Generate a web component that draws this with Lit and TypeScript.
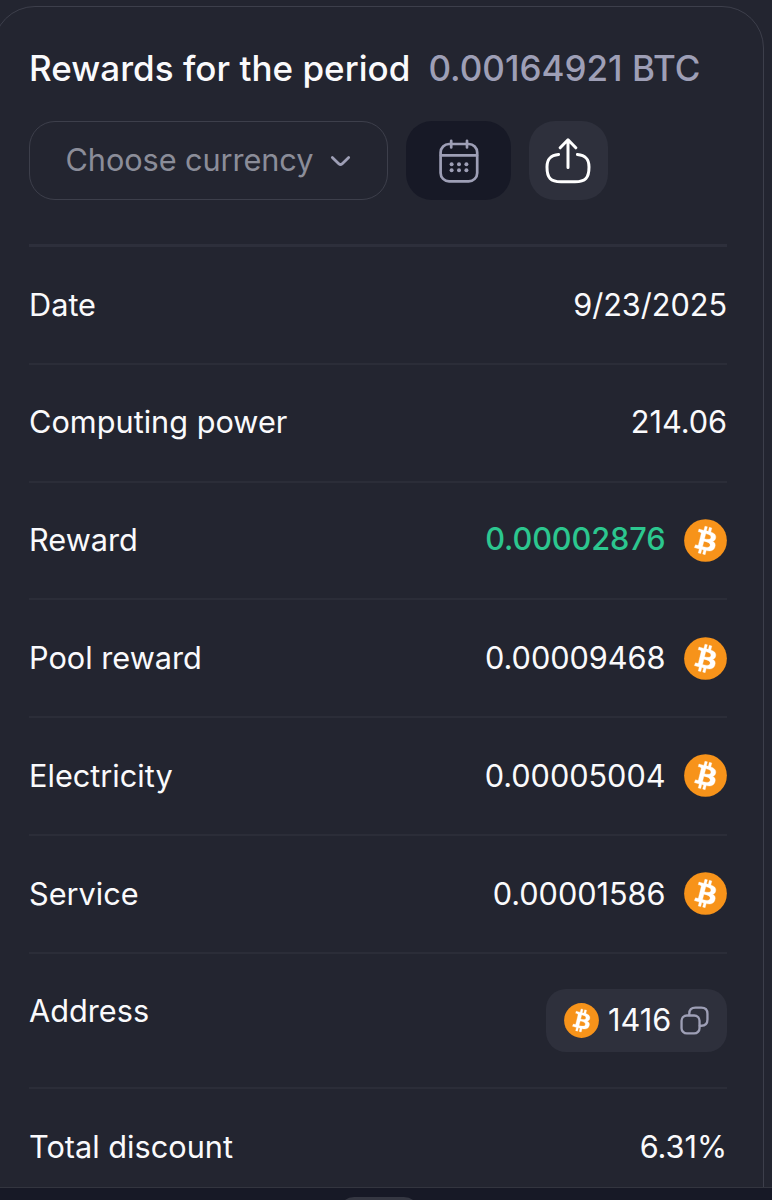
import { LitElement, html, css, nothing } from "lit";
import { customElement, property } from "lit/decorators.js";

interface Row {
  label: string;
  value: string;
  coin?: boolean;
  positive?: boolean;
}

const ROWS: Row[] = [
  { label: "Date", value: "9/23/2025" },
  { label: "Computing power", value: "214.06" },
  { label: "Reward", value: "0.00002876", coin: true, positive: true },
  { label: "Pool reward", value: "0.00009468", coin: true },
  { label: "Electricity", value: "0.00005004", coin: true },
  { label: "Service", value: "0.00001586", coin: true },
];

@customElement("btc-coin")
class BtcCoin extends LitElement {
  @property({ type: Number }) size = 43;
  static styles = css`
    :host { display: block; flex: none; }
    svg { display: block; }
  `;
  render() {
    return html`<svg width=${this.size} height=${this.size} viewBox="0 0 32 32">
      <circle cx="16" cy="16" r="15.9" fill="#f7931a" />
      <path
        transform="translate(16 16) scale(1.06) translate(-16 -16)"
        fill="#fff"
        stroke="#fff"
        stroke-width="0.25"
        d="M23.189 14.02c.314-2.096-1.283-3.223-3.465-3.975l.708-2.84-1.728-.43-.69 2.765c-.454-.114-.92-.22-1.385-.326l.695-2.783L15.596 6l-.708 2.839c-.376-.086-.746-.17-1.104-.26l.002-.009-2.384-.595-.46 1.846s1.283.294 1.256.312c.7.175.826.638.805 1.006l-.806 3.235c.048.012.11.03.18.057l-.183-.045-1.13 4.532c-.086.212-.303.531-.793.41.018.025-1.256-.313-1.256-.313l-.858 1.978 2.25.561c.418.105.828.215 1.231.318l-.715 2.872 1.727.43.708-2.84c.472.127.93.245 1.378.357l-.706 2.828 1.728.43.715-2.866c2.948.558 5.164.333 6.097-2.333.752-2.146-.037-3.385-1.588-4.192 1.13-.26 1.98-1.003 2.207-2.538zm-3.95 5.538c-.533 2.147-4.148.986-5.32.695l.95-3.805c1.172.293 4.929.872 4.37 3.11zm.535-5.569c-.487 1.953-3.495.96-4.47.717l.86-3.45c.975.243 4.118.696 3.61 2.733z"
      />
    </svg>`;
  }
}

@customElement("app-root")
class AppRoot extends LitElement {
  static styles = css`
    :host {
      display: flex;
      flex-direction: column;
      height: 1200px;
      overflow: hidden;
      background: #232530;
      color: #fafafc;
      font-family: Inter, "Liberation Sans", sans-serif;
      font-size: 30.7px;
      line-height: 40px;
    }
    * { box-sizing: border-box; }
    svg { display: block; flex: none; }
    .viewport { flex: 1; min-height: 0; overflow: hidden; padding-top: 6px; }
    .card {
      width: 771px;
      height: 1300px;
      margin-left: -7px;
      padding: 39px 36px 0 35px;
      border: 1.5px solid #3d3f4b;
      border-radius: 42px;
    }
    .title {
      display: flex;
      gap: 18px;
      height: 45px;
      line-height: 45px;
      font-size: 35px;
      font-weight: 500;
      white-space: nowrap;
    }
    .heading { letter-spacing: 0.03px; }
    .amount { color: #9e9fb6; }
    .controls { display: flex; gap: 18px; margin-top: 30px; height: 79px; }
    .select {
      display: flex;
      align-items: center;
      gap: 17px;
      width: 359px;
      padding-left: 35.5px;
      padding-bottom: 1px;
      border: 1.5px solid #3d3f4b;
      border-radius: 26px;
      color: #8b8d99;
      letter-spacing: -0.08px;
      white-space: nowrap;
    }
    .chevron { margin-top: 2px; }
    .btn { display: flex; align-items: center; justify-content: center; border-radius: 26px; }
    .calendar { width: 105px; background: #171926; }
    .share { width: 78.5px; background: #2e303c; padding-right: 1px; }
    .list { margin-top: 44px; border-top: 3px solid #2d2f3b; }
    .row {
      display: flex;
      justify-content: space-between;
      height: 117.8px;
      padding-top: 37.7px;
      border-bottom: 2px solid #2b2d38;
      white-space: nowrap;
    }
    .value { display: flex; height: 40px; align-items: center; gap: 18.5px; }
    .num { letter-spacing: -0.05px; }
    .positive { color: #2cc78f; font-weight: 500; letter-spacing: -0.1px; margin-top: -3px; }
    .address { height: 135.5px; padding-top: 35px; }
    .address .label { padding-top: 2px; }
    .chip {
      display: flex;
      align-items: center;
      gap: 9px;
      width: 181px;
      height: 63px;
      padding-left: 18px;
      border-radius: 20px;
      background: #2e303c;
    }
    .bottom {
      display: flex;
      justify-content: center;
      flex: none;
      height: 13px;
      padding-top: 9px;
      border-top: 1.5px solid #33353f;
      background: #171926;
      overflow: hidden;
    }
    .handle { width: 80px; height: 30px; margin-right: 14px; border-radius: 15px; background: #353742; flex: none; }
  `;

  render() {
    return html`
      <div class="viewport">
        <section class="card">
          <div class="title">
            <span class="heading">Rewards for the period</span>
            <span class="amount">0.00164921 BTC</span>
          </div>
          <div class="controls">
            <div class="select">
              <span>Choose currency</span>
              <svg class="chevron" width="21" height="13" viewBox="0 0 22 14" fill="none" stroke="#9e9fb6" stroke-width="3" stroke-linecap="round" stroke-linejoin="round">
                <path d="M2.2 2.7 9.4 9.6Q11 11 12.6 9.6L19.8 2.7" />
              </svg>
            </div>
            <div class="btn calendar">
              <svg width="40" height="44" viewBox="0 0 40 44" fill="none" stroke="#9e9fb6" stroke-width="2.7" stroke-linecap="round">
                <rect x="1.6" y="5" width="36.6" height="37.4" rx="8.5" />
                <path d="M2 16.4H38M12.2 1.8V8.4M28 1.8V8.4" />
                <g fill="#9e9fb6" stroke="none">
                  <circle cx="12.6" cy="25.2" r="2" /><circle cx="20" cy="25.2" r="2" /><circle cx="27.4" cy="25.2" r="2" />
                  <circle cx="12.6" cy="31.2" r="2" /><circle cx="20" cy="31.2" r="2" /><circle cx="27.4" cy="31.2" r="2" />
                </g>
              </svg>
            </div>
            <div class="btn share">
              <svg width="46" height="46" viewBox="0 0 46 46" fill="none" stroke="#fff" stroke-width="3" stroke-linecap="round" stroke-linejoin="round">
                <path d="M13.6 16.5C5.5 17.3 2 21 2 29C2 40 5.5 43.8 16 43.8H30C40.5 43.8 44 40 44 29C44 21 40.5 17.3 32.4 16.5" />
                <path d="M23 29.5V2.5M15.2 9.8 23 1.8 30.8 9.8" />
              </svg>
            </div>
          </div>
          <div class="list">
            ${ROWS.map(
              (r) => html`<div class="row">
                <span class="label">${r.label}</span>
                <div class="value">
                  <span class=${r.positive ? "positive" : "num"}>${r.value}</span>
                  ${r.coin ? html`<btc-coin .size=${43}></btc-coin>` : nothing}
                </div>
              </div>`
            )}
            <div class="row address">
              <span class="label">Address</span>
              <div class="chip">
                <btc-coin .size=${35}></btc-coin>
                <span class="id">1416</span>
                <svg width="29" height="29" viewBox="0 0 30 30" fill="none" stroke="#9e9fb6" stroke-width="2.4" stroke-linecap="round" stroke-linejoin="round">
                  <rect x="1.6" y="9.8" width="18.6" height="18.6" rx="5.5" />
                  <path d="M9.6 9.5V8Q9.6 1.6 16 1.6H22Q28.4 1.6 28.4 8V14Q28.4 20.4 22 20.4H20.5" />
                </svg>
              </div>
            </div>
            <div class="row last">
              <span class="label">Total discount</span>
              <div class="value"><span class="num">6.31%</span></div>
            </div>
          </div>
        </section>
      </div>
      <div class="bottom"><div class="handle"></div></div>
    `;
  }
}
